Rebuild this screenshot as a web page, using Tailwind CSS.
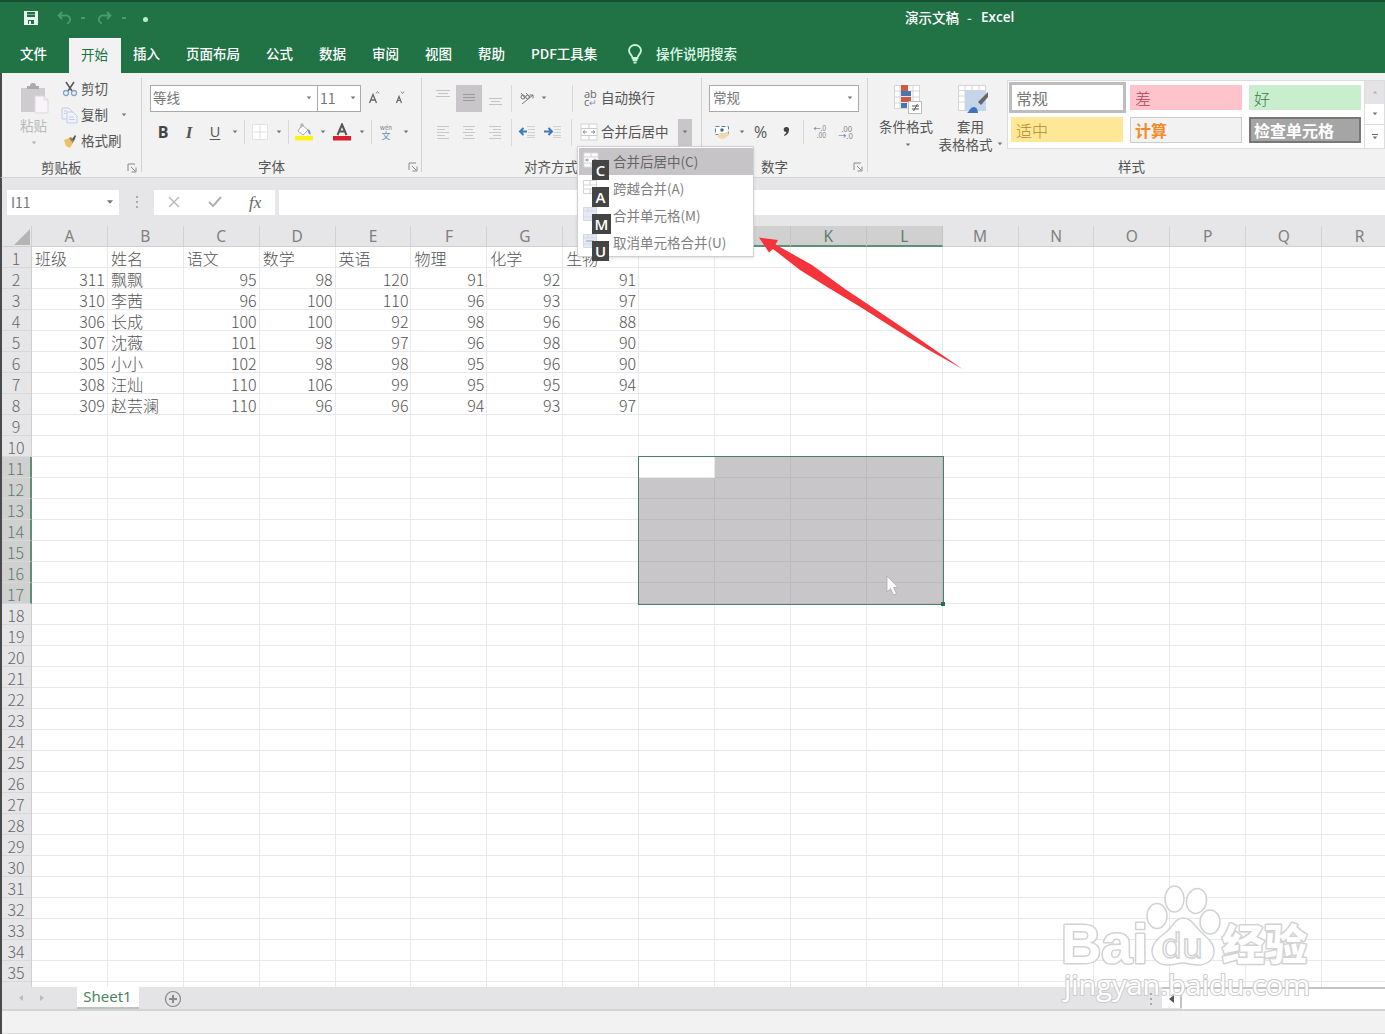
<!DOCTYPE html>
<html lang="zh-CN">
<head>
    <meta charset="UTF-8">
    <meta name="viewport" content="width=device-width, initial-scale=1.0">
    <script src="https://cdn.jsdelivr.net/npm/@tailwindcss/browser@4"></script>
    <title>演示文稿 - Excel</title>
</head>
<body class="relative w-[1385px] h-[1034px] overflow-hidden bg-[#f2f2f2] font-['Noto_Sans_CJK_SC',sans-serif] text-[13.5px] leading-none text-[#555]">

    <!-- Shared icons -->
    <svg class="hidden">
        <symbol id="caret" viewBox="0 0 6 4"><path d="M0.7 0.6h4.6L3 3.3z" fill="#777"/></symbol>
        <symbol id="launcher" viewBox="0 0 10 10"><path d="M1 8V1h7M4 4l4 4M9 4.500V9H4.500" fill="none" stroke="#888"/></symbol>
        <symbol id="merge" viewBox="0 0 18 18"><path d="M1 1h16v16H1z" fill="#fdfdfd" stroke="#d4d4d4"/><path d="M1 5.500h16M1 12.500h16M9 1v4.500M9 12.500V17" stroke="#ccc"/><path d="M3 9h4M11 9h4M5 7.500L3 9l2 1.500M13 7.500L15 9l-2 1.500" fill="none" stroke="#8492a5"/></symbol>
    </svg>

    <!-- Title bar -->
    <header class="bg-[#217346] border-t-2 border-[#155030] h-[73px] text-white">
        <div class="flex items-center h-[32px]">
            <svg class="ml-[24px] w-[14px] h-[14px]" viewBox="0 0 14 14"><path d="M0 0h14v14H0z" fill="#e6fff0"/><path d="M3 1h8v5H3zM4 9h6v4H4z" fill="#217346"/><path d="M3 3.500h8" stroke="#7ab090"/><path d="M5 10h2v3H5z" fill="#e6fff0"/></svg>
            <svg class="ml-[19px] w-[14px] h-[14px]" viewBox="0 0 14 14" fill="none" stroke="#4c9a70" stroke-width="1.8"><path d="M5 1L1.500 4.500 5 8M2 4.500h6a4 4 0 0 1 2 8"/></svg>
            <span class="ml-[10px] w-[4px] h-[2px] bg-[#4c9a70]"></span>
            <svg class="ml-[13px] w-[14px] h-[14px]" viewBox="0 0 14 14" fill="none" stroke="#4c9a70" stroke-width="1.8"><path d="M9 1l3.500 3.500L9 8M12 4.500H6a4 4 0 0 0-2 8"/></svg>
            <span class="ml-[10px] w-[4px] h-[2px] bg-[#4c9a70]"></span>
            <span class="ml-[17px] mt-[3px] w-[5px] h-[5px] rounded-sm bg-[#b5f0cd]"></span>
            <span class="ml-[757px] font-medium flex"><span class="w-[62px]">演示文稿</span><span class="w-[14px]">-</span><span class="font-['Open_Sans',sans-serif] font-semibold text-[13.5px]">Excel</span></span>
        </div>
        <nav class="flex items-center h-[39px] font-medium">
            <span class="w-[67px] ml-[2px] pl-[18px]">文件</span>
            <span class="w-[52px] h-[35px] self-end flex items-center justify-center bg-[#f2f2f2] text-[#217346] font-normal border-t border-white pb-[2px] pr-px">开始</span>
            <span class="ml-[12px] w-[53px]">插入</span>
            <span class="w-[80px]">页面布局</span>
            <span class="w-[53px]">公式</span>
            <span class="w-[53px]">数据</span>
            <span class="w-[53px]">审阅</span>
            <span class="w-[53px]">视图</span>
            <span class="w-[53px]">帮助</span>
            <span class="w-[96px]">PDF工具集</span>
            <svg class="w-[16px] h-[20px] mr-[13px]" viewBox="0 0 16 20" fill="none" stroke="#c8f5da" stroke-width="1.8"><path d="M5.500 14C5.500 11 2 10 2 6.500a6 5.500 0 0 1 12 0C14 10 10.500 11 10.500 14z"/><path d="M5.500 16h5M6.500 18.500h3"/></svg>
            <span class="text-[#dff8e8]">操作说明搜索</span>
        </nav>
    </header>

    <!-- Ribbon -->
    <section class="flex h-[105px] pt-[5px] bg-[#f2f2f2] border-b border-[#d4d4d6] border-l-2 border-l-[#4a4a4a] whitespace-nowrap">

        <!-- Clipboard -->
        <div class="w-[140px] h-[94px] border-r border-[#d2d2d2] flex flex-col shrink-0">
            <div class="flex h-[76px] shrink-0">
                <div class="w-[58px] pl-[5px] pt-[5px] flex flex-col items-center text-[#b9b9b9]">
                    <svg class="w-[30px] h-[32px] ml-[3px]" viewBox="0 0 30 32"><path d="M1 5h24v24H1z" fill="#cfccd0"/><path d="M7 6V3h3a3 3 0 0 1 6 0h3v3z" fill="#aaa"/><path d="M15 13h9l4 4v13H15z" fill="#f9f4fa" stroke="#ddd6de"/><path d="M24 13v4h4" fill="none" stroke="#ddd6de"/></svg>
                    <span class="mt-[4px]">粘贴</span>
                    <svg class="w-[6px] h-[4px] mt-[8px] opacity-50"><use href="#caret"/></svg>
                </div>
                <div class="flex flex-col">
                    <div class="flex items-center h-[22px]">
                        <svg class="w-[16px] h-[16px] ml-[2px] mr-[3px]" viewBox="0 0 16 16" fill="none"><path d="M4 1l6 9M12 1L6 10" stroke="#555" stroke-width="1.500"/><circle cx="4" cy="12" r="2.500" stroke="#7ea3cf" stroke-width="1.300"/><circle cx="12" cy="12" r="2.500" stroke="#7ea3cf" stroke-width="1.300"/></svg>
                        <span>剪切</span>
                    </div>
                    <div class="flex items-center h-[30px]">
                        <svg class="w-[17px] h-[17px] ml-[1px] mr-[3px]" viewBox="0 0 17 17" fill="#eef2fa" stroke="#c3cee1"><path d="M1 1h7l3 3v8H1z"/><path d="M6 5h6l4 4v7H6z"/><path d="M8 10h5M8 12.500h6M3 4h3M3 6.500h2"/></svg>
                        <span>复制</span>
                        <svg class="w-[6px] h-[4px] ml-[13px]"><use href="#caret"/></svg>
                    </div>
                    <div class="flex items-center h-[22px]">
                        <svg class="w-[16px] h-[16px] ml-[2px] mr-[3px]" viewBox="0 0 16 16"><path d="M2 7l5-2 4 5-3 5-4-2z" fill="#ecc064"/><path d="M7 5l2-1 3 4-1.500 2z" fill="#8d7f6a"/><path d="M10 6l3-4 1 1-2 5z" fill="#555"/></svg>
                        <span>格式刷</span>
                    </div>
                </div>
            </div>
            <div class="flex items-center h-[26px] pl-[39px] pt-[2px] shrink-0">
                <span class="w-[86px]">剪贴板</span>
                <svg class="w-[10px] h-[10px]"><use href="#launcher"/></svg>
            </div>
        </div>

        <!-- Font -->
        <div class="w-[280px] h-[94px] border-r border-[#d2d2d2] flex flex-col shrink-0 pl-[8px]">
            <div class="flex items-center h-[40px] shrink-0">
                <div class="w-[168px] h-[27px] bg-white border border-[#aaa] flex items-center justify-between pl-[2px] pr-[5px]"><span class="text-[#777]">等线</span><svg class="w-[6px] h-[4px]"><use href="#caret"/></svg></div>
                <div class="w-[43px] h-[27px] bg-white border border-l-0 border-[#aaa] flex items-center justify-between pl-[2px] pr-[4px]"><span class="text-[14px] text-[#777]">11</span><svg class="w-[6px] h-[4px]"><use href="#caret"/></svg></div>
                <svg class="w-[12px] h-[16px] ml-[7px]" viewBox="0 0 12 16"><path d="M1.500 13L5 4.500 8.500 13M2.800 10h4.500" fill="none" stroke="#666" stroke-width="1.300"/><path d="M8 3.500l1.500-2L11 3.500" fill="none" stroke="#7c8ca0"/></svg>
                <svg class="w-[12px] h-[16px] ml-[14px]" viewBox="0 0 12 16"><path d="M2.500 13L5 6.500 7.500 13M3.400 10.500h3.300" fill="none" stroke="#666" stroke-width="1.200"/><path d="M7 1.500l1.500 2L10 1.500" fill="none" stroke="#7c8ca0"/></svg>
            </div>
            <div class="flex items-center h-[28px] shrink-0">
                <span class="w-[26px] text-center text-[16px] font-bold text-[#444] font-['Open_Sans',sans-serif]">B</span>
                <span class="w-[26px] text-center text-[17px] italic font-bold text-[#555] font-['Liberation_Serif',serif]">I</span>
                <span class="w-[26px] text-center text-[14.5px] underline underline-offset-2 font-['Open_Sans',sans-serif]">U</span>
                <svg class="w-[6px] h-[4px] ml-[4px]"><use href="#caret"/></svg>
                <span class="w-px h-[24px] ml-[6px] bg-[#d8d8d8]"></span>
                <svg class="w-[16px] h-[16px] ml-[7px]" viewBox="0 0 16 16"><path d="M.5.500h15v15H.5zM8 0v16M0 8h16" fill="#fff" stroke="#e2e2e2"/></svg>
                <svg class="w-[6px] h-[4px] ml-[8px]"><use href="#caret"/></svg>
                <span class="w-px h-[24px] ml-[6px] bg-[#d8d8d8]"></span>
                <svg class="w-[18px] h-[18px] ml-[6px]" viewBox="0 0 18 18"><path d="M7 2l6 5-5 5-5-4z" fill="#fff" stroke="#aaa"/><path d="M6 5V1h2v3" fill="none" stroke="#aaa"/><path d="M13 6c2 1 3 3 2.500 6-2-1-3-3-2.500-6z" fill="#6c94c4"/><path d="M0 13h18v4.500H0z" fill="#f9f21a"/></svg>
                <svg class="w-[6px] h-[4px] ml-[7px]"><use href="#caret"/></svg>
                <svg class="w-[18px] h-[18px] ml-[7px]" viewBox="0 0 18 18"><path d="M4.500 12L9 1.500 13.500 12M6 8.500h6" fill="none" stroke="#555" stroke-width="2"/><path d="M0 13h18v4.500H0z" fill="#d8202c"/></svg>
                <svg class="w-[6px] h-[4px] ml-[8px]"><use href="#caret"/></svg>
                <span class="w-px h-[24px] ml-[6px] bg-[#d8d8d8]"></span>
                <div class="ml-[7px] w-[14px] flex flex-col items-center text-[9px] text-[#6a8dbd]"><span class="text-[6px] text-[#777]">wén</span><span>文</span></div>
                <svg class="w-[6px] h-[4px] ml-[10px]"><use href="#caret"/></svg>
            </div>
            <div class="flex items-center h-[34px] pl-[108px] pt-[8px] shrink-0">
                <span class="w-[150px]">字体</span>
                <svg class="w-[10px] h-[10px]"><use href="#launcher"/></svg>
            </div>
        </div>

        <!-- Alignment -->
        <div class="w-[280px] h-[94px] border-r border-[#d2d2d2] flex flex-col shrink-0">
            <div class="flex items-center h-[40px] shrink-0">
                <svg class="w-[14px] h-[16px] ml-[14px]" viewBox="0 0 14 16" stroke="#c2c2c2"><path d="M0 .5h14M2 3.500h10M0 6.500h14"/></svg>
                <div class="w-[26px] h-[27px] ml-[6px] bg-[#c8c6c9] flex items-center justify-center"><svg class="w-[14px] h-[10px]" viewBox="0 0 14 10" stroke="#999"><path d="M1 1.500h12M1 4.500h12M1 7.500h12"/></svg></div>
                <svg class="w-[13px] h-[16px] ml-[7px]" viewBox="0 0 13 16" stroke="#c2c2c2"><path d="M0 8.500h13M2 11.500h9M0 14.500h13"/></svg>
                <span class="w-px h-[27px] ml-[9px] bg-[#d8d8d8]"></span>
                <svg class="w-[16px] h-[16px] ml-[7px]" viewBox="0 0 16 16" fill="none" stroke="#777"><path d="M3 14L14 5M10.500 5H14v3.500"/><circle cx="4" cy="7" r="2"/><path d="M6 8L2 3M7 3l4 4"/><circle cx="8.500" cy="7" r="1.800"/></svg>
                <svg class="w-[6px] h-[4px] ml-[6px]"><use href="#caret"/></svg>
                <span class="w-px h-[27px] ml-[25px] bg-[#d8d8d8]"></span>
                <div class="ml-[11px] w-[14px] text-[11px] leading-[8px] text-[#666] font-['Open_Sans',sans-serif]">ab<br>c<span class="text-[#7b93c0] text-[9px]">↵</span></div>
                <span class="ml-[3px]">自动换行</span>
            </div>
            <div class="flex items-center h-[28px] shrink-0">
                <svg class="w-[14px] h-[14px] ml-[14px]" viewBox="0 0 14 14" stroke="#c8c8c8"><path d="M1 1.500h12M1 4.500h8M1 7.500h12M1 10.500h8M1 13.500h12"/></svg>
                <svg class="w-[14px] h-[14px] ml-[12px]" viewBox="0 0 14 14" stroke="#c8c8c8"><path d="M1 1.500h12M3 4.500h8M1 7.500h12M3 10.500h8M1 13.500h12"/></svg>
                <svg class="w-[14px] h-[14px] ml-[12px]" viewBox="0 0 14 14" stroke="#c8c8c8"><path d="M1 1.500h12M5 4.500h8M1 7.500h12M5 10.500h8M1 13.500h12"/></svg>
                <span class="w-px h-[27px] ml-[9px] bg-[#d8d8d8]"></span>
                <svg class="w-[17px] h-[14px] ml-[6px]" viewBox="0 0 17 14"><path d="M9 1.500h8M10 4.500h7M10 7.500h7M9 10.500h8M9 12.500h8" stroke="#d0d0d0"/><path d="M9 6.500H2M5.500 3L2 6.500 5.500 10" fill="none" stroke="#3f78b5" stroke-width="2"/></svg>
                <svg class="w-[17px] h-[14px] ml-[9px]" viewBox="0 0 17 14"><path d="M9 1.500h8M10 4.500h7M10 7.500h7M9 10.500h8M9 12.500h8" stroke="#d0d0d0"/><path d="M0 6.500h8M4.500 3L8 6.500 4.500 10" fill="none" stroke="#3f78b5" stroke-width="2"/></svg>
                <span class="w-px h-[27px] ml-[10px] bg-[#d8d8d8]"></span>
                <svg class="w-[18px] h-[18px] ml-[8px]"><use href="#merge"/></svg>
                <span class="ml-[3px] w-[77px]">合并后居中</span>
                <div class="w-[14px] h-[27px] bg-[#c8c6c9] flex items-center justify-center"><svg class="w-[6px] h-[4px]"><use href="#caret"/></svg></div>
            </div>
            <div class="flex items-center h-[34px] pl-[102px] pt-[8px] shrink-0">对齐方式</div>
        </div>

        <!-- Number -->
        <div class="w-[166px] h-[94px] border-r border-[#d2d2d2] flex flex-col shrink-0 pl-[6px]">
            <div class="flex items-center h-[40px] shrink-0">
                <div class="w-[150px] h-[27px] ml-px bg-white border border-[#aaa] flex items-center justify-between pl-[3px] pr-[5px]"><span class="text-[#777]">常规</span><svg class="w-[6px] h-[4px]"><use href="#caret"/></svg></div>
            </div>
            <div class="flex items-center h-[28px] shrink-0">
                <svg class="w-[17px] h-[16px] ml-[6px]" viewBox="0 0 17 16"><path d="M1.500 2.500h13v8h-13z" fill="#fff" stroke="#5680b4" stroke-dasharray="4 2"/><circle cx="8" cy="6" r="1.800" fill="#40699c"/><path d="M4 10c3-2 6 0 10-3l1 4-5 4-6-1z" fill="#f0d9b2"/></svg>
                <svg class="w-[6px] h-[4px] ml-[8px]"><use href="#caret"/></svg>
                <span class="ml-[9px] text-[16px] font-['Open_Sans',sans-serif]">%</span>
                <svg class="w-[7px] h-[10px] ml-[16px]" viewBox="0 0 7 10"><path d="M3 0a2.500 2.500 0 0 1 3 3C6 6 4 8 1.500 9l-.5-1c1.500-.8 2.300-2 2.300-3A2.500 2.500 0 0 1 3 0z" fill="#444"/></svg>
                <span class="w-px h-[24px] ml-[13px] bg-[#d8d8d8]"></span>
                <div class="ml-[9px] w-[13px] text-[7px] leading-[7px] text-right text-[#888]"><span class="text-[#4b75b0]">←</span>.0<br>.00</div>
                <div class="ml-[12px] w-[14px] text-[8px] leading-[7px] text-right text-[#888]">.00<br><span class="text-[#4b75b0]">→</span>.0</div>
            </div>
            <div class="flex items-center h-[34px] pl-[53px] pt-[8px] shrink-0">
                <span class="w-[92px]">数字</span>
                <svg class="w-[10px] h-[10px]"><use href="#launcher"/></svg>
            </div>
        </div>

        <!-- Styles -->
        <div class="flex flex-col flex-1">
            <div class="flex h-[74px]">
                <div class="w-[76px] flex flex-col items-center pt-[6px]">
                    <svg class="w-[30px] h-[30px] ml-[4px]" viewBox="0 0 30 30"><path d="M1.500 1.500h25v23h-25zM1 7h26M1 13h26M1 19h26M7 1v24M20 1v24" fill="#fff" stroke="#d5d5d5"/><path d="M8 1h7v6H8zM8 13h10v5H8z" fill="#cf5a42"/><path d="M8 7h10v5H8zM8 19h6v5H8z" fill="#4577b5"/><path d="M15.500 17.500h13v12h-13z" fill="#fff" stroke="#bbb"/><path d="M19 22h7M19 25h7M24.500 20l-4 7" stroke="#555"/></svg>
                    <span class="mt-[6px]">条件格式</span>
                    <svg class="w-[6px] h-[4px] mt-[9px] ml-[3px]"><use href="#caret"/></svg>
                </div>
                <div class="w-[61px] ml-[-3px] flex flex-col items-center pt-[6px]">
                    <svg class="w-[32px] h-[30px] ml-[2px]" viewBox="0 0 32 30"><path d="M1.500 1.500h27v25h-27z" fill="#fff" stroke="#d5d5d5"/><path d="M8 6h21v21H8z" fill="#c3d5ea"/><path d="M1 6.500h28M1 12h28M1 18h28M8 1v26M15 1v6M22 1v6" stroke="#d0d5da"/><path d="M31 8v5l-7 8-3-3z" fill="#666"/><path d="M10 29c2-1 3-6 7-6 3 0 4 4 4 6z" fill="#3f74ba"/></svg>
                    <span class="mt-[6px] mr-[2px]">套用</span>
                    <span class="mt-[4px] flex items-center mr-[2px]">表格格式<svg class="w-[6px] h-[4px] ml-[4px]"><use href="#caret"/></svg></span>
                </div>
                <!-- Cell style gallery -->
                <div class="ml-[5px] mt-[2px] w-[358px] h-[69px] border border-[#ddd] bg-white grid grid-cols-[119px_119px_111px] grid-rows-[32px_32px] pl-px pt-px text-[16px] shrink-0">
                    <div class="w-[117px] h-[31px] border-[3px] border-[#bdbdbf] flex items-center pl-[4px] text-[#777]">常规</div>
                    <div class="w-[112px] h-[25px] ml-[2px] mt-[3px] bg-[#fec3cb] flex items-center pl-[5px] text-[#b0405a] font-light">差</div>
                    <div class="w-[112px] h-[25px] ml-[2px] mt-[3px] bg-[#c8eecd] flex items-center pl-[5px] text-[#3f7a48] font-light">好</div>
                    <div class="w-[112px] h-[25px] ml-[2px] mt-[3px] bg-[#fee898] flex items-center pl-[5px] text-[#b28930] font-light">适中</div>
                    <div class="w-[112px] h-[26px] ml-[2px] mt-[3px] bg-[#f2f2f2] border border-[#ccc] flex items-center pl-[4px] text-[#f58a28] font-bold">计算</div>
                    <div class="w-[112px] h-[26px] ml-[2px] mt-[3px] bg-[#a5a5a5] border-2 border-[#777] flex items-center pl-[3px] text-white font-bold">检查单元格</div>
                </div>
                <div class="mt-[2px] w-[20px] h-[69px] flex flex-col border border-l-0 border-[#ddd] bg-white shrink-0">
                    <div class="h-[23px] bg-[#e4e4e6] flex items-center justify-center"><svg class="w-[6px] h-[4px] rotate-180 opacity-40"><use href="#caret"/></svg></div>
                    <div class="h-[22px] border-b border-[#ddd] flex items-center justify-center"><svg class="w-[6px] h-[4px]"><use href="#caret"/></svg></div>
                    <div class="h-[23px] flex flex-col gap-px items-center justify-center"><span class="w-[6px] h-px bg-[#666]"></span><svg class="w-[6px] h-[4px]"><use href="#caret"/></svg></div>
                </div>
            </div>
            <div class="flex items-center h-[28px] pl-[250px] pt-[3px] shrink-0">样式</div>
        </div>
    </section>

    <!-- Formula bar -->
    <section class="flex items-center h-[48px] bg-[#e6e6e8] border-l-2 border-[#4a4a4a]">
        <div class="ml-[5px] w-[112px] h-[25px] bg-white flex items-center justify-between pl-[4px] pr-[5px] text-[14px] text-[#777]"><span>I11</span><svg class="w-[8px] h-[6px]"><use href="#caret"/></svg></div>
        <svg class="w-[4px] h-[14px] ml-[16px]" viewBox="0 0 4 14" fill="#aaa"><path d="M1 1h2v2H1zM1 6h2v2H1zM1 11h2v2H1z"/></svg>
        <div class="ml-[15px] w-[121px] h-[25px] bg-white flex items-center">
            <svg class="w-[12px] h-[12px] ml-[14px]" viewBox="0 0 12 12" fill="none" stroke="#bbb" stroke-width="1.500"><path d="M1 1l10 10M11 1L1 11"/></svg>
            <svg class="w-[14px] h-[12px] ml-[28px]" viewBox="0 0 14 12" fill="none" stroke="#b0b0b0" stroke-width="2"><path d="M1 6l4 4 8-9"/></svg>
            <span class="ml-[27px] text-[17px] italic text-[#666] font-['Liberation_Serif',serif]">fx</span>
        </div>
        <div class="ml-[4px] flex-1 h-[25px] bg-white"></div>
    </section>

    <!-- Sheet -->
    <main class="h-[761px] overflow-hidden bg-white border-l-2 border-[#4a4a4a]">
        <div id="head" class="flex h-[21px] w-[1420px] bg-[#e6e6e8] text-[15.5px] text-[#808080]">
            <div class="w-[30px] shrink-0 flex items-end justify-end border-r border-b border-[#cfcfcf]"><svg class="w-[16px] h-[16px] mr-px mb-px" viewBox="0 0 16 16"><path d="M16 0v16H0z" fill="#b5b5b7"/></svg></div>
        </div>
        <div id="rows" class="w-[1420px] text-[16px] font-light text-[#555]"></div>
    </main>

    <!-- Sheet tabs -->
    <footer class="border-l-2 border-[#4a4a4a] h-[47px] bg-[#f2f2f2]">
        <div class="flex h-[24px] bg-[#e4e4e7] border-b-2 border-[#d3d3d4]">
            <svg class="w-[5px] h-[8px] ml-[16px] mt-[7px]" viewBox="0 0 5 8"><path d="M5 1v6L1 4z" fill="#bbb"/></svg>
            <svg class="w-[5px] h-[8px] ml-[17px] mt-[7px]" viewBox="0 0 5 8"><path d="M0 1v6l4-3z" fill="#bbb"/></svg>
            <div class="ml-[32px] w-[62px] h-[22px] bg-white border-b-2 border-[#bcc4be] flex items-center justify-center pb-px pr-px text-[15px] text-[#4a8560] font-['Noto_Sans',sans-serif]">Sheet1</div>
            <svg class="w-[18px] h-[18px] ml-[25px] mt-[3px]" viewBox="0 0 18 18" fill="none" stroke="#8a8a8a"><circle cx="9" cy="9" r="7.500" stroke-width="1.200"/><path d="M9 5v8M5 9h8" stroke-width="2"/></svg>
            <svg class="w-[4px] h-[14px] ml-[967px] mt-[5px]" viewBox="0 0 4 14" fill="#aaa"><path d="M1 1h2v2H1zM1 6h2v2H1zM1 11h2v2H1z"/></svg>
            <div class="ml-[9px] w-[20px] h-[21px] bg-white border-r-2 border-t-2 border-[#c4c4c4] flex items-center justify-center"><svg class="w-[5px] h-[8px]" viewBox="0 0 5 8"><path d="M5 0v8L0 4z" fill="#555"/></svg></div>
            <div class="flex-1 h-[22px] bg-white border-t-2 border-[#c4c4c4]"></div>
        </div>
        <div class="h-[23px] border-b border-[#dcdcdc]"></div>
    </footer>

    <!-- Merge menu -->
    <div class="absolute left-[577px] top-[146px] w-[177px] h-[111px] bg-white border border-[#d0d0d2] shadow-sm pt-px text-[13.5px] text-[#808080]">
        <div class="relative h-[27px] flex items-center pl-[34px] ml-px bg-[#c6c4c7] text-[#666]">
            <svg class="absolute left-[4px] top-[4px] w-[16px] h-[16px]"><use href="#merge"/></svg>
            <span class="absolute left-[13px] top-[12px] w-[17px] h-[20px] z-10 bg-[#444] text-white text-[15px] font-semibold font-['Open_Sans',sans-serif] flex items-center justify-center">C</span>合并后居中(C)
        </div>
        <div class="relative h-[27px] flex items-center pl-[34px] ml-px">
            <svg class="absolute left-[4px] top-[5px] w-[14px] h-[14px]" viewBox="0 0 14 14"><path d="M.5.500h13v13H.5zM0 5h14M0 9h14M7 0v5M7 9v5" fill="#fff" stroke="#d4d4d4"/></svg>
            <span class="absolute left-[13px] top-[12px] w-[17px] h-[20px] z-10 bg-[#444] text-white text-[15px] font-semibold font-['Open_Sans',sans-serif] flex items-center justify-center">A</span>跨越合并(A)
        </div>
        <div class="relative h-[27px] flex items-center pl-[34px] ml-px">
            <svg class="absolute left-[4px] top-[5px] w-[14px] h-[14px]" viewBox="0 0 14 14"><path d="M.5.500h13v13H.5zM0 4h14M0 10h14M5 0v4M9 0v4" fill="#e4eaf5" stroke="#d4d9e4"/></svg>
            <span class="absolute left-[13px] top-[12px] w-[19px] h-[20px] z-10 bg-[#444] text-white text-[15px] font-semibold font-['Open_Sans',sans-serif] flex items-center justify-center">M</span>合并单元格(M)
        </div>
        <div class="relative h-[27px] flex items-center pl-[34px] ml-px">
            <svg class="absolute left-[4px] top-[5px] w-[14px] h-[14px]" viewBox="0 0 14 14"><path d="M.5.500h13v13H.5zM0 4h14M0 10h14M5 0v4M9 0v4" fill="#e4eaf5" stroke="#d4d9e4"/><path d="M3 7h8" stroke="#8fa3c6"/></svg>
            <span class="absolute left-[13px] top-[12px] w-[17px] h-[20px] z-10 bg-[#444] text-white text-[15px] font-semibold font-['Open_Sans',sans-serif] flex items-center justify-center">U</span>取消单元格合并(U)
        </div>
    </div>

    <!-- Selection outline -->
    <div class="absolute left-[638px] top-[456px] w-[306px] h-[149px] border-[1.500px] border-[#4d7f66] pointer-events-none">
        <span class="absolute -right-[2px] -bottom-[2px] w-[4px] h-[4px] bg-[#217346]"></span>
    </div>

    <!-- Mouse cursor -->
    <svg class="absolute left-[885px] top-[574px] w-[16px] h-[22px]" viewBox="0 0 16 22"><path d="M2 2v16l3.500-3.500L8.500 21l3-1.500-3-6H13z" fill="#fff" stroke="#aaa" stroke-width=".8"/></svg>

    <!-- Red arrow -->
    <svg class="absolute left-[750px] top-[230px] w-[220px] h-[145px]" viewBox="750 230 220 145"><path d="M759 237.500L778 240 775.500 244.500 812 265 845 289 878 311 912 334 962.500 369 928 349.500 895 329 862 308 828 287.500 800 270 773 249 769 252.500z" fill="#f5333a"/></svg>

    <!-- Watermark -->
    <svg class="absolute left-[1055px] top-[880px] w-[265px] h-[125px] font-['Open_Sans','Noto_Sans_CJK_SC',sans-serif]" viewBox="1055 880 265 125" fill="#fff" stroke="#d2d2d2">
        <g font-weight="900" stroke-width="3" stroke-linejoin="round" paint-order="stroke">
            <text class="font-['Liberation_Sans',sans-serif]" x="1061" y="963" font-size="56" textLength="87" lengthAdjust="spacingAndGlyphs">Bai</text>
            <text x="1222" y="960" font-size="42" textLength="85" lengthAdjust="spacingAndGlyphs">经验</text>
        </g>
        <g stroke-width="1.500">
            <ellipse cx="1157" cy="916" rx="10" ry="12.500"/>
            <ellipse cx="1174.500" cy="899" rx="9.500" ry="13"/>
            <ellipse cx="1196.500" cy="901" rx="10" ry="12.500" transform="rotate(12 1196.500 901)"/>
            <ellipse cx="1210" cy="922" rx="10" ry="12"/>
            <path d="M1183 918c9 0 12 9 19 15s13 12 12 20-8 12-16 12c-6 0-10-2-15-2s-9 2-15 2c-9 0-15-5-16-13s6-14 13-19 10-15 18-15z"/>
        </g>
        <text x="1161" y="958" font-size="34" textLength="42" lengthAdjust="spacingAndGlyphs" stroke-width="1.500">du</text>
        <text x="1064" y="995" font-size="27" textLength="246" lengthAdjust="spacingAndGlyphs" stroke="#ccc" stroke-width="2" paint-order="stroke">jingyan.baidu.com</text>
    </svg>

    <script>
        const data = [
            ['班级', '姓名', '语文', '数学', '英语', '物理', '化学', '生物'],
            [311, '飘飘', 95, 98, 120, 91, 92, 91],
            [310, '李茜', 96, 100, 110, 96, 93, 97],
            [306, '长成', 100, 100, 92, 98, 96, 88],
            [307, '沈薇', 101, 98, 97, 96, 98, 90],
            [305, '小小', 102, 98, 98, 95, 96, 90],
            [308, '汪灿', 110, 106, 99, 95, 95, 94],
            [309, '赵芸澜', 110, 96, 96, 94, 93, 97]
        ];

        // Selected range is I11:L17
        const colSelected = c => c >= 8 && c <= 11;
        const rowSelected = r => r >= 11 && r <= 17;

        let head = '';
        for (let c = 0; c < 18; c++) {
            const look = colSelected(c) ? 'bg-[#d0d0d1] border-b-2 border-b-[#5f8f76] border-r-[#c4c4c6] text-[#5c7d6b]' : 'border-b border-b-[#cfcfcf] border-r-[#d2d2d4]';
            head += `<div class="w-[75.9px] shrink-0 pt-[2px] flex items-center justify-center border-r font-['Noto_Sans',sans-serif] ${look}">${String.fromCharCode(65 + c)}</div>`;
        }
        document.getElementById('head').insertAdjacentHTML('beforeend', head);

        let rows = '';
        for (let r = 1; r <= 36; r++) {
            const look = rowSelected(r) ? 'bg-[#d0d0d1] border-r-2 border-r-[#5f8f76] text-[#5c7d6b]' : 'bg-[#e6e6e8] border-r border-r-[#cfcfcf] text-[#666]';
            rows += `<div class="flex h-[21px]"><div class="w-[30px] shrink-0 flex items-center justify-center pt-px pr-px border-b border-b-[#d8d8da] ${look}">${r === 36 ? '' : r}</div>`;
            for (let c = 0; c < 18; c++) {
                const value = (data[r - 1] || [])[c] ?? '';
                const align = typeof value === 'number' ? 'justify-end pr-[2px]' : 'pl-[3px]';
                const active = r === 11 && c === 8;
                const fill = rowSelected(r) && colSelected(c) && !active ? 'bg-[#c8c6c9] border-[#bcbabd]' : 'border-[#e9e9eb]';
                rows += `<div class="w-[75.9px] shrink-0 flex items-center pt-[2px] border-r border-b whitespace-nowrap ${align} ${fill}">${value}</div>`;
            }
            rows += '</div>';
        }
        document.getElementById('rows').innerHTML = rows;
    </script>
</body>
</html>
